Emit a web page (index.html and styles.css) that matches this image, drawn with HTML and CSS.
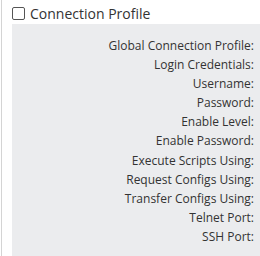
FILE: index.html
```html
<!DOCTYPE html>
<html>
<head>
<link rel="stylesheet" href="styles.css">
</head>
<body>
<div class="panel">
  <label class="head"><span class="box"></span>Connection Profile</label>
  <div class="grey">
    <div class="row">Global Connection Profile:</div>
    <div class="row">Login Credentials:</div>
    <div class="row">Username:</div>
    <div class="row">Password:</div>
    <div class="row">Enable Level:</div>
    <div class="row">Enable Password:</div>
    <div class="row">Execute Scripts Using:</div>
    <div class="row">Request Configs Using:</div>
    <div class="row">Transfer Configs Using:</div>
    <div class="row">Telnet Port:</div>
    <div class="row">SSH Port:</div>
  </div>
</div>
</body>
</html>
```
FILE: styles.css
```css
html, body { margin: 0; padding: 0; background: #fff; }
body { font-family: "Open Sans", sans-serif; color: #333; overflow: hidden; height: 256px; }
.panel { border-left: 1px solid #d4d4d4; margin-left: 1px; padding-left: 10px; height: 256px; }
.head { display: flex; align-items: center; height: 24px; font-size: 14px; color: #333; padding-top: 3px; box-sizing: border-box; }
.box { width: 11px; height: 11px; border: 1px solid #555; border-radius: 2px; margin-right: 5px; background: #fff; }
.grey { background: #ebecee; padding: 12px 6px 0 0; height: 232px; box-sizing: border-box; }
.row { text-align: right; font-size: 12px; line-height: 19.1px; height: 19.1px; color: #333; }
```
